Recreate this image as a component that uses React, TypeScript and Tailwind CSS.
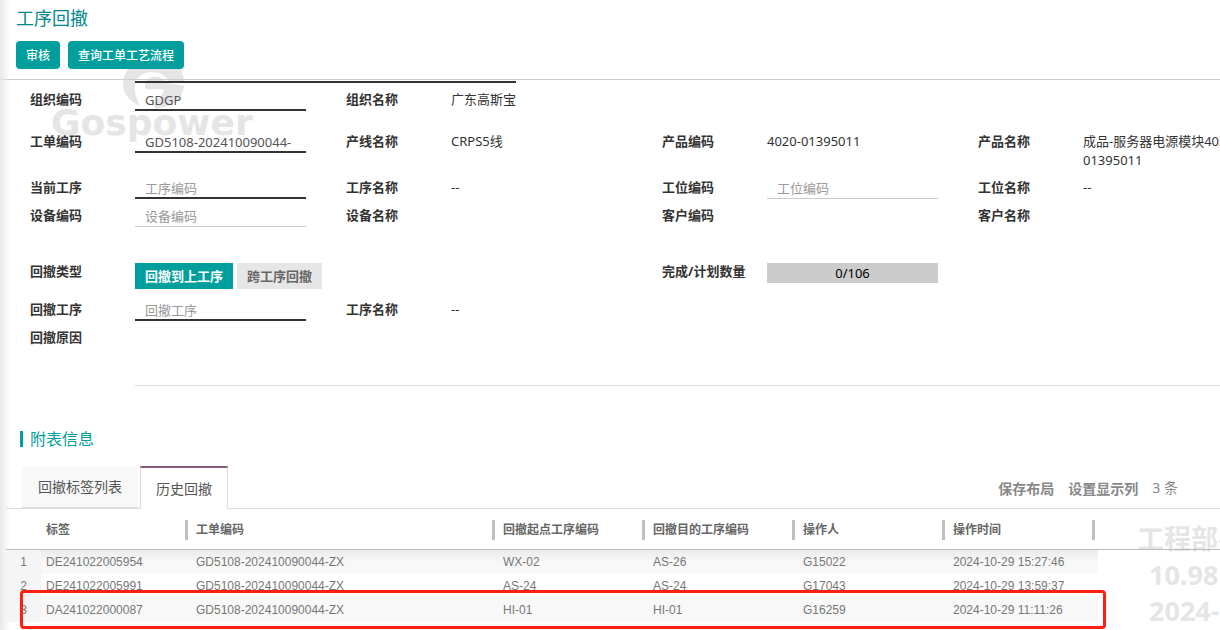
import React from 'react';
import clsx from 'clsx';

const columns = [
    { title: '标签', width: 'w-[150px]' },
    { title: '工单编码', width: 'w-[307px]' },
    { title: '回撤起点工序编码', width: 'w-[150px]' },
    { title: '回撤目的工序编码', width: 'w-[150px]' },
    { title: '操作人', width: 'w-[150px]' },
    { title: '操作时间', width: 'w-[150px]' },
];

const records = [
    ['DE241022005954', 'GD5108-202410090044-ZX', 'WX-02', 'AS-26', 'G15022', '2024-10-29 15:27:46'],
    ['DE241022005991', 'GD5108-202410090044-ZX', 'AS-24', 'AS-24', 'G17043', '2024-10-29 13:59:37'],
    ['DA241022000087', 'GD5108-202410090044-ZX', 'HI-01', 'HI-01', 'G16259', '2024-10-29 11:11:26'],
];

const rowGrid = 'grid grid-cols-[repeat(4,minmax(316px,1fr))]';

function Field({ label, children }: { label: string; children?: React.ReactNode }) {
    return (
        <div className="flex items-start">
            <span className="w-[105px] shrink-0 pt-[3px] font-bold">{label}</span>
            <div className="mr-10 min-w-0 flex-1">{children}</div>
        </div>
    );
}

function Text({ children }: { children: React.ReactNode }) {
    return <p className="pt-[3px]">{children}</p>;
}

function InputField({ label, value, placeholder, required }: { label: string; value?: string; placeholder?: string; required?: boolean }) {
    return (
        <label className="flex items-start">
            <span className="w-[105px] shrink-0 pt-[3px] font-bold">{label}</span>
            <input
                type="text"
                defaultValue={value}
                placeholder={placeholder}
                className={clsx(
                    'mr-10 h-6 min-w-0 flex-1 bg-transparent px-2.5 text-[#555] outline-none placeholder:text-[#999]',
                    required ? 'border-b-2 border-[#333] pt-[3px]' : 'border-b border-[#ccc] pt-0.5'
                )}
            />
        </label>
    );
}

function LogoWatermark() {
    return (
        <div className="pointer-events-none absolute left-[51px] top-[62px] -z-10 text-[#e5e5e5]">
            <svg width="62" height="50" viewBox="0 0 62 50" className="ml-[72px]" fill="currentColor">
                <path d="M17 44C6 39 0 31 0 22C0 8 13-6 31-6C49-6 60 4 61 19H46C41 10 29 8 20 12C10 17 9 28 17 44Z" />
                <path d="M22 21C24 14 36 12 42 19C46 23 53 21 61 24C60 34 54 41 44 44L33 47L29 41C36 38 40 33 41 28C34 25 27 30 22 26Z" />
            </svg>
            <p className="-mt-[10px] font-['DejaVu_Sans',sans-serif] text-[36px] font-bold leading-[42px]">Gospower</p>
        </div>
    );
}

function App() {
    return (
        <div className="relative isolate min-h-screen overflow-hidden bg-white font-['Noto_Sans','Noto_Sans_CJK_SC',sans-serif] text-[13px] leading-[19px] text-[#333]">
            <LogoWatermark />
            <div className="pointer-events-none absolute left-[1137px] top-[521px] -z-10 whitespace-nowrap text-[27px] font-bold leading-9 text-[#e5e5e5]">
                <p>工程部-</p>
                <p className="pl-3">10.98</p>
                <p className="pl-3">2024-</p>
            </div>
            <div className="pointer-events-none absolute inset-y-0 left-0 w-2.5 bg-gradient-to-r from-[#e8e8e8] to-transparent" />

            <header className="border-b border-[#ccc] px-4 pb-2.5 pt-[5px]">
                <h1 className="text-lg leading-[26px] text-[#00888a]">工序回撤</h1>
                <div className="mt-2.5 flex gap-2 text-xs text-white">
                    <button className="h-7 rounded-sm bg-[#009f9d] px-2.5 pt-0.5 font-medium">审核</button>
                    <button className="h-7 rounded-sm bg-[#009f9d] px-2.5 pt-0.5 font-medium">查询工单工艺流程</button>
                </div>
            </header>

            <form className="pl-[30px]">
                <div className="mb-1 ml-[105px] mt-px h-0.5 w-[381px] bg-[#333]" />
                <div className={clsx(rowGrid, 'min-h-[42px]')}>
                    <InputField label="组织编码" value="GDGP" required />
                    <Field label="组织名称"><Text>广东高斯宝</Text></Field>
                </div>
                <div className={clsx(rowGrid, 'min-h-[46px]')}>
                    <InputField label="工单编码" value="GD5108-202410090044-" required />
                    <Field label="产线名称"><Text>CRPS5线</Text></Field>
                    <Field label="产品编码"><Text>4020-01395011</Text></Field>
                    <Field label="产品名称"><Text>成品-服务器电源模块4020-01395011</Text></Field>
                </div>
                <div className={clsx(rowGrid, 'min-h-7')}>
                    <InputField label="当前工序" placeholder="工序编码" required />
                    <Field label="工序名称"><Text>--</Text></Field>
                    <InputField label="工位编码" placeholder="工位编码" />
                    <Field label="工位名称"><Text>--</Text></Field>
                </div>
                <div className={clsx(rowGrid, 'min-h-14')}>
                    <InputField label="设备编码" placeholder="设备编码" />
                    <Field label="设备名称" />
                    <Field label="客户编码" />
                    <Field label="客户名称" />
                </div>
                <div className={clsx(rowGrid, 'min-h-[38px]')}>
                    <Field label="回撤类型">
                        <div className="mt-1 flex gap-1 whitespace-nowrap font-bold">
                            <button type="button" className="h-[26px] bg-[#009f9d] px-2.5 text-white">回撤到上工序</button>
                            <button type="button" className="h-[26px] bg-[#e6e6e6] px-2.5 text-[#666]">跨工序回撤</button>
                        </div>
                    </Field>
                    <div />
                    <Field label="完成/计划数量">
                        <div className="mt-1 h-5 bg-[#ccc] text-center leading-[21px] text-black">0/106</div>
                    </Field>
                </div>
                <div className={clsx(rowGrid, 'min-h-7')}>
                    <InputField label="回撤工序" placeholder="回撤工序" required />
                    <Field label="工序名称"><Text>--</Text></Field>
                </div>
                <label className="flex items-start">
                    <span className="w-[105px] shrink-0 pt-[3px] font-bold">回撤原因</span>
                    <textarea className="h-[61px] flex-1 resize-none border-b border-[#ddd] bg-transparent px-2.5 outline-none" />
                </label>
            </form>

            <section className="mt-[45px] pl-1.5">
                <h2 className="ml-3.5 flex h-4 items-center border-l-[3px] border-[#009f9d] pl-[7px] text-base text-[#009f9d]">附表信息</h2>
                <div className="mt-[19px] flex items-start border-b border-[#ddd] pl-4 text-sm text-[#555]">
                    <button className="h-[42px] border-b border-[#ddd] bg-[#f8f8f8] px-4">回撤标签列表</button>
                    <button className="-mb-px ml-0.5 h-[43px] border-x border-t-2 border-x-[#ddd] border-t-[#875a7b] bg-white px-[15px]">历史回撤</button>
                    <div className="ml-auto mr-[42px] mt-3 flex items-start gap-3.5 text-[#888]">
                        <button className="pt-px font-bold">保存布局</button>
                        <button className="pt-px font-bold">设置显示列</button>
                        <span>3 条</span>
                    </div>
                </div>

                <div className="relative text-xs">
                    <div className="box-content h-10 border-b border-[#bbb]" />
                    <table className="-mt-[41px] w-[1092px] table-fixed border-collapse font-['Liberation_Sans','Noto_Sans_CJK_SC',sans-serif] text-[#777]">
                        <thead>
                            <tr className="h-[41px] text-[#666]">
                                <th className="w-[35px]" aria-label="序号" />
                                {columns.map((column) => (
                                    <th key={column.title} className={clsx(column.width, 'p-0 text-left font-bold')}>
                                        <div className="mr-[3px] flex h-5 items-center border-r-[3px] border-[#c0c0c0] pl-[5px]">{column.title}</div>
                                    </th>
                                ))}
                            </tr>
                        </thead>
                        <tbody>
                            {records.map((record, index) => (
                                <tr key={record[0]} className={clsx('h-6', index % 2 === 0 ? 'bg-[#f8f8f8]' : 'bg-white', index === 0 && 'bg-gradient-to-b from-[#ebebeb] to-[#f8f8f8] to-50%')}>
                                    <td className="bg-[#f5f5f5] p-0 text-center">{index + 1}</td>
                                    {record.map((value, i) => (
                                        <td key={i} className="p-0 pl-[5px]">{value}</td>
                                    ))}
                                </tr>
                            ))}
                        </tbody>
                    </table>
                    {/* marks the latest record */}
                    <div className="pointer-events-none absolute left-3.5 top-[81px] h-[39px] w-[1086px] rounded border-[3px] border-[#ff1f11]" />
                </div>
            </section>
        </div>
    );
}

export default App;
